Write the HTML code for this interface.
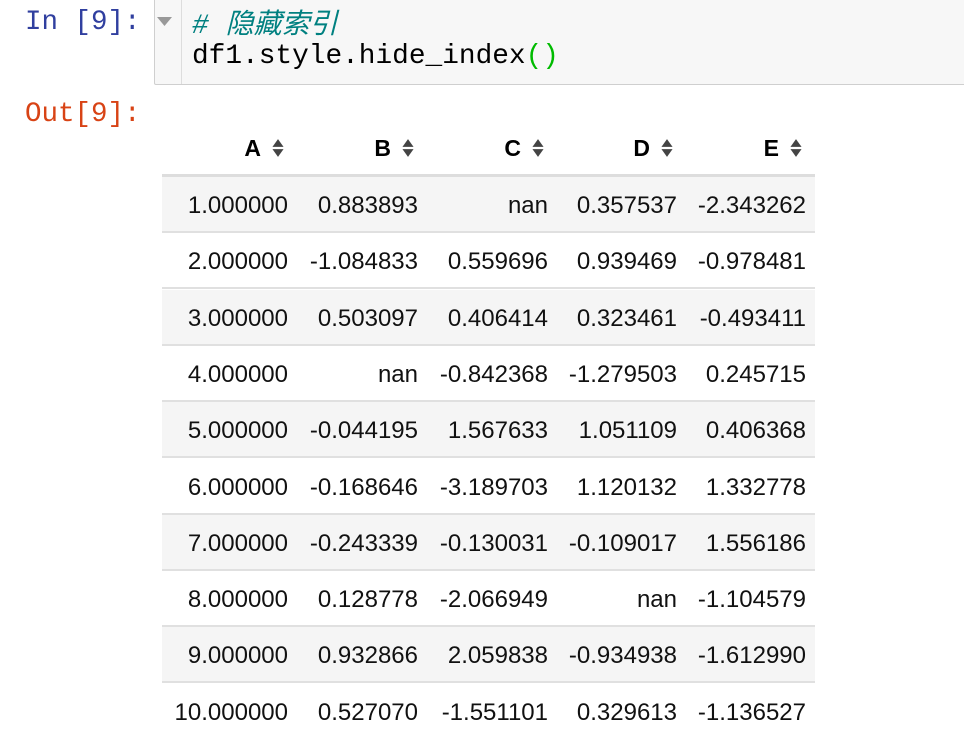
<!DOCTYPE html>
<html><head><meta charset="utf-8">
<style>
html,body{margin:0;padding:0;background:#fff;width:964px;height:740px;overflow:hidden;position:relative}
.mono{font-family:"Liberation Mono","Noto Sans CJK SC",monospace}
.abs{position:absolute}
.box{position:absolute;left:154px;top:-4px;width:820px;height:87px;background:#f7f7f7;border:1px solid #cfcfcf;border-radius:2px}
.gut{position:absolute;left:181px;top:0;width:1px;height:84px;background:#ddd}
.row{position:absolute;left:162px;width:653px;height:56px;border-bottom:2px solid #e0e0e0;box-sizing:border-box}
.odd{background:#f5f5f5}
.c{position:absolute;font-family:"Liberation Sans",sans-serif;font-size:24px;color:#111;text-align:right;white-space:nowrap}
.h{position:absolute;top:135px;font-family:"Liberation Sans",sans-serif;font-weight:bold;font-size:23px;color:#000;white-space:nowrap}
.s{display:inline-block;width:14px;height:20px;vertical-align:-2px;margin-left:10px}
</style></head><body>
<div class="box"></div>
<div class="gut"></div>
<svg class="abs" style="left:157px;top:17px" width="16" height="10"><polygon points="0,0 15,0 7.5,9" fill="#999"/></svg>
<div class="abs mono" style="left:25px;top:7px;font-size:27.5px;color:#303f9f">In [9]:</div>
<div class="abs mono" style="left:25px;top:99px;font-size:27.5px;color:#d84315">Out[9]:</div>
<div class="abs" style="left:192px;top:2px;font-size:28px;color:#008080;font-style:italic;font-family:'Liberation Mono','Noto Sans CJK SC',monospace"># 隐藏索引</div>
<div class="abs mono" style="left:192px;top:41px;font-size:27.8px;color:#000">df1.style.hide_index<span style="color:#0b0">()</span></div>
<div class="abs" style="left:162px;top:174px;width:653px;height:3px;background:#ddd"></div>
<div id="t"></div>
<script>
var d=[["1.000000","0.883893","nan","0.357537","-2.343262"],["2.000000","-1.084833","0.559696","0.939469","-0.978481"],["3.000000","0.503097","0.406414","0.323461","-0.493411"],["4.000000","nan","-0.842368","-1.279503","0.245715"],["5.000000","-0.044195","1.567633","1.051109","0.406368"],["6.000000","-0.168646","-3.189703","1.120132","1.332778"],["7.000000","-0.243339","-0.130031","-0.109017","1.556186"],["8.000000","0.128778","-2.066949","nan","-1.104579"],["9.000000","0.932866","2.059838","-0.934938","-1.612990"],["10.000000","0.527070","-1.551101","0.329613","-1.136527"]];
var R=[288,418,548,677,806],H=["A","B","C","D","E"],o="";
var ic='<svg class="s" viewBox="0 0 12 18"><polygon points="6,1 11,8 1,8" fill="#444"/><polygon points="1,10 11,10 6,17" fill="#444"/></svg>';
for(var j=0;j<5;j++){o+='<div class="h" style="right:'+(964-R[j]+3)+'px">'+H[j]+ic+'</div>';}
for(var i=0;i<10;i++){var yy=177+i*56.3;
o+='<div class="row'+(i%2==0?' odd':'')+'" style="top:'+yy+'px;'+(i==9?'border-bottom:none':'')+'"></div>';
for(var j=0;j<5;j++){o+='<div class="c" style="top:'+(yy+15)+'px;right:'+(964-R[j])+'px">'+d[i][j]+'</div>';}}
document.getElementById("t").innerHTML=o;
</script>
</body></html>
